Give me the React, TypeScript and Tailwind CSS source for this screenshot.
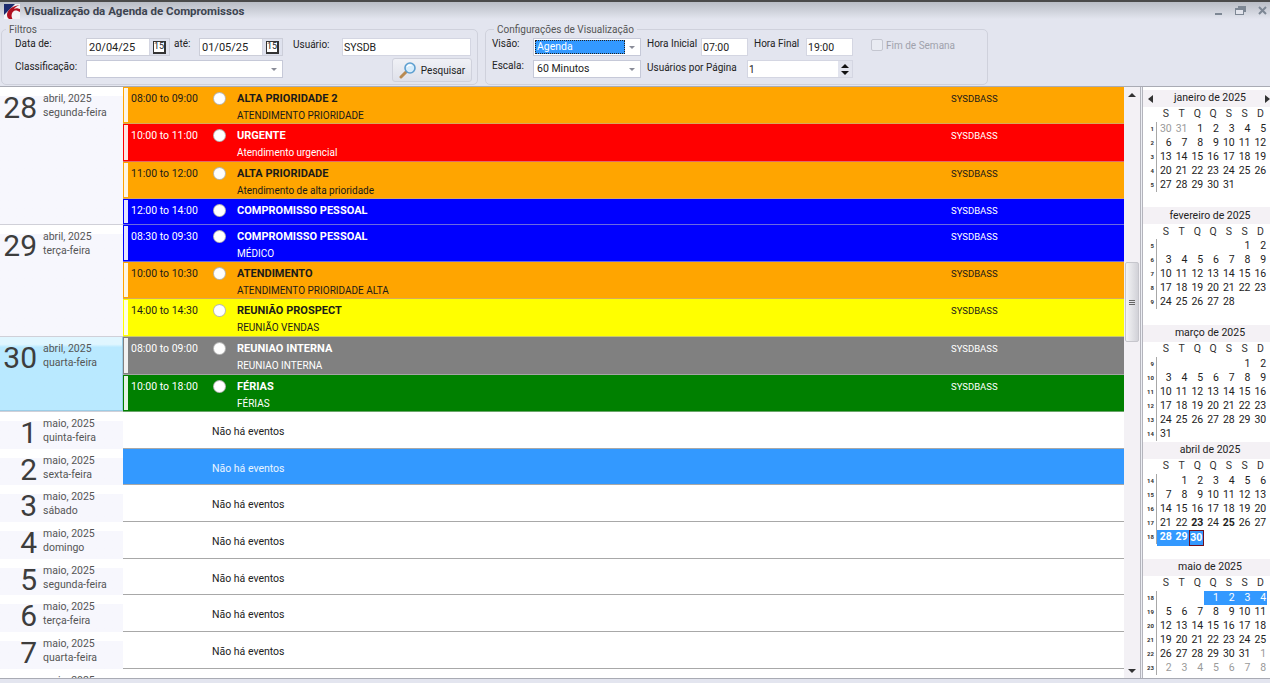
type Ev = { time: string; title: string; sub?: string; bg: string; edge: string; text: string; h: string };
type Day = { num: number; month: string; week: string; events?: Ev[]; selected?: boolean; active?: boolean };

const ORANGE = { bg: "bg-[#ffa500]", edge: "border-b-[#d9a95a]", text: "text-[#1a1a1a]" };
const RED = { bg: "bg-[#ff0000]", edge: "border-b-[#e06a6a]", text: "text-white" };
const BLUE = { bg: "bg-[#0000ff]", edge: "border-b-[#6a6ae0]", text: "text-white" };
const YELLOW = { bg: "bg-[#ffff00]", edge: "border-b-[#c9c96a]", text: "text-[#1a1a1a]" };
const GRAY = { bg: "bg-[#808080]", edge: "border-b-[#a5a5a5]", text: "text-white" };
const GREEN = { bg: "bg-[#008000]", edge: "border-b-[#6aa56a]", text: "text-white" };

const DAYS: Day[] = [
  {
    num: 28,
    month: "abril, 2025",
    week: "segunda-feira",
    events: [
      { time: "08:00 to 09:00", title: "ALTA PRIORIDADE 2", sub: "ATENDIMENTO PRIORIDADE", h: "h-[37px]", ...ORANGE },
      { time: "10:00 to 11:00", title: "URGENTE", sub: "Atendimento urgencial", h: "h-[38px]", ...RED },
      { time: "11:00 to 12:00", title: "ALTA PRIORIDADE", sub: "Atendimento de alta prioridade", h: "h-[37px]", ...ORANGE },
      { time: "12:00 to 14:00", title: "COMPROMISSO PESSOAL", h: "h-[26px]", ...BLUE },
    ],
  },
  {
    num: 29,
    month: "abril, 2025",
    week: "terça-feira",
    events: [
      { time: "08:30 to 09:30", title: "COMPROMISSO PESSOAL", sub: "MÉDICO", h: "h-[37px]", ...BLUE },
      { time: "10:00 to 10:30", title: "ATENDIMENTO", sub: "ATENDIMENTO PRIORIDADE ALTA", h: "h-[37px]", ...ORANGE },
      { time: "14:00 to 14:30", title: "REUNIÃO PROSPECT", sub: "REUNIÃO VENDAS", h: "h-[38px]", ...YELLOW },
    ],
  },
  {
    num: 30,
    month: "abril, 2025",
    week: "quarta-feira",
    active: true,
    events: [
      { time: "08:00 to 09:00", title: "REUNIAO INTERNA", sub: "REUNIAO INTERNA", h: "h-[38px]", ...GRAY },
      { time: "10:00 to 18:00", title: "FÉRIAS", sub: "FÉRIAS", h: "h-[37px]", ...GREEN },
    ],
  },
  { num: 1, month: "maio, 2025", week: "quinta-feira" },
  { num: 2, month: "maio, 2025", week: "sexta-feira", selected: true },
  { num: 3, month: "maio, 2025", week: "sábado" },
  { num: 4, month: "maio, 2025", week: "domingo" },
  { num: 5, month: "maio, 2025", week: "segunda-feira" },
  { num: 6, month: "maio, 2025", week: "terça-feira" },
  { num: 7, month: "maio, 2025", week: "quarta-feira" },
  { num: 8, month: "maio, 2025", week: "quinta-feira" },
];

type Cell = { d: number; muted?: boolean; blue?: boolean; bold?: boolean; box?: boolean; white?: boolean } | null;
type Month = { title: string; firstWeek: number; rows: Cell[][]; arrows?: boolean };

function weeks(offset: number, count: number, opts: { lead?: number[]; trail?: boolean; mark?: (d: number) => Partial<NonNullable<Cell>> } = {}): Cell[][] {
  const cells: Cell[] = [];
  for (let i = 0; i < offset; i++) cells.push(null);
  (opts.lead ?? []).forEach((d) => cells.push({ d, muted: true }));
  for (let d = 1; d <= count; d++) cells.push({ d, ...(opts.mark ? opts.mark(d) : {}) });
  let next = 1;
  while (opts.trail && cells.length < 42) cells.push({ d: next++, muted: true });
  const rows: Cell[][] = [];
  for (let i = 0; i < cells.length; i += 7) rows.push(cells.slice(i, i + 7));
  return rows;
}

const MONTHS: Month[] = [
  { title: "janeiro de 2025", firstWeek: 1, rows: weeks(0, 31, { lead: [30, 31] }), arrows: true },
  { title: "fevereiro de 2025", firstWeek: 5, rows: weeks(5, 28) },
  { title: "março de 2025", firstWeek: 9, rows: weeks(5, 31) },
  {
    title: "abril de 2025",
    firstWeek: 14,
    rows: weeks(1, 30, {
      mark: (d) => {
        if (d === 23 || d === 25) return { bold: true };
        if (d === 30) return { blue: true, bold: true, white: true, box: true };
        if (d >= 28) return { blue: true, bold: true, white: true };
        return {};
      },
    }),
  },
  {
    title: "maio de 2025",
    firstWeek: 18,
    rows: weeks(3, 31, { trail: true, mark: (d) => (d <= 4 ? { blue: true, white: true } : {}) }),
  },
];

function Logo() {
  return (
    <svg width="16" height="16" viewBox="0 0 16 16" className="mt-[2px] shrink-0">
      <rect width="16" height="16" fill="#f4f4f6" />
      <path d="M0 0 L11 0 L0 11 Z" fill="#1c2a6e" />
      <path d="M16 1 C8 2 3 6 3 11 C3 13 4 15 7 16 L9 16 C7 13 7 9 10 7 C12 6 14 7 16 8 L16 5 C13 4 12 4 10 5 C11 3 13 2 16 1 Z" fill="#b01020" />
    </svg>
  );
}

function WindowButtons() {
  return (
    <div className="flex items-center gap-[12px]">
      <svg width="8" height="8" viewBox="0 0 8 8">
        <rect x="0" y="6" width="7" height="2" fill="#7d8794" />
      </svg>
      <svg width="11" height="9" viewBox="0 0 11 9">
        <rect x="3" y="0" width="8" height="6" fill="#7d8794" />
        <rect x="0.5" y="2.5" width="8" height="6" fill="#e2e4ec" stroke="#7d8794" />
        <rect x="0" y="2" width="9" height="2" fill="#7d8794" />
      </svg>
      <svg width="9" height="9" viewBox="0 0 9 9">
        <path d="M1 1 L8 8 M8 1 L1 8" stroke="#7d8794" strokeWidth="2" />
      </svg>
    </div>
  );
}

function CalendarButton() {
  return (
    <div className="flex h-full w-[20px] items-center justify-center border-l border-[#d4d6e2] bg-[#dfe2ee]">
      <span className="flex h-[13px] w-[13px] items-center justify-center border border-b-2 border-r-2 border-[#333] bg-white text-[9px] leading-none text-[#222]">
        15
      </span>
    </div>
  );
}

function DateField({ value }: { value: string }) {
  return (
    <div className="flex h-[18px] w-[84px] items-center border border-[#ccced9] bg-white">
      <span className="flex-1 pl-[2px] pt-[2px] text-[11px]">{value}</span>
      <CalendarButton />
    </div>
  );
}

function TextBox({ value, className }: { value: string; className: string }) {
  return (
    <div className={"flex h-[18px] items-center border border-[#d4d6e2] bg-white pl-[1px] pt-[1px] text-[10.5px] " + className}>{value}</div>
  );
}

function Select({ value, focused, className }: { value: string; focused?: boolean; className: string }) {
  return (
    <div className={"flex h-[18px] items-center border border-[#c6c9d8] bg-white " + className}>
      <div className="min-w-0 flex-1 p-[1px]">
        {focused ? (
          <div className="flex h-[14px] w-[90px] items-center border border-dotted border-[#222] bg-[#3399ff] pl-[1px] text-white">{value}</div>
        ) : (
          <span className="pl-[2px]">{value}</span>
        )}
      </div>
      <span className="mr-[5px] mt-[1px] h-0 w-0 border-x-[3px] border-t-[3px] border-x-transparent border-t-[#8a8c98]" />
    </div>
  );
}

function SearchIcon() {
  return (
    <svg width="18" height="17" viewBox="0 0 18 17">
      <path d="M8 9 L2 15" stroke="#b88a52" strokeWidth="3" strokeLinecap="round" />
      <circle cx="11" cy="6" r="5" fill="#d7ecfb" stroke="#5d9fd0" strokeWidth="1.6" />
      <path d="M8 5 C9 3.5 11 3 12.5 3.5" stroke="#fff" strokeWidth="1.2" fill="none" />
    </svg>
  );
}

function Toolbar() {
  return (
    <div className="flex h-[68px] gap-[7px] border-b border-[#a9abb4] bg-[#e3e5ef] pl-[1px] text-[10px] text-[#222]">
      <fieldset className="mt-[4px] h-[62px] w-[477px] shrink-0 rounded-[5px] border border-[#cfd1dc] pl-[13px]">
        <legend className="-ml-[9px] px-[3px] leading-[13px] text-[#555]">Filtros</legend>
        <div className="mt-[2px] flex items-start">
          <span className="-mt-[2px] w-[71px]">Data de:</span>
          <DateField value="20/04/25" />
          <span className="-mt-[2px] ml-[4px] w-[25px]">até:</span>
          <DateField value="01/05/25" />
          <span className="-mt-[1px] ml-[10px] w-[49px]">Usuário:</span>
          <TextBox value="SYSDB" className="w-[129px]" />
        </div>
        <div className="mt-[4px] flex items-start">
          <span className="-mt-[1px] w-[71px]">Classificação:</span>
          <Select value="" className="w-[197px]" />
          <button className="-mt-[2px] ml-[109px] flex h-[24px] w-[80px] items-center justify-center gap-[4px] rounded-[3px] border border-[#cfd1dc] bg-gradient-to-b from-[#f0f1f6] to-[#dfe1ea] text-[#222]">
            <SearchIcon />
            Pesquisar
          </button>
        </div>
      </fieldset>

      <fieldset className="mt-[4px] h-[62px] w-[503px] shrink-0 rounded-[5px] border border-[#cfd1dc] pl-[6px]">
        <legend className="ml-[2px] px-[3px] leading-[13px] text-[#555]">Configurações de Visualização</legend>
        <div className="mt-[2px] flex items-start">
          <span className="-mt-[2px] w-[41px]">Visão:</span>
          <Select value="Agenda" focused className="w-[108px] text-[10.5px]" />
          <span className="-mt-[2px] ml-[6px] w-[54px]">Hora Inicial</span>
          <TextBox value="07:00" className="w-[47px]" />
          <span className="-mt-[2px] ml-[6px] w-[52px]">Hora Final</span>
          <TextBox value="19:00" className="w-[47px]" />
          <span className="ml-[18px] mt-[1px] h-[12px] w-[12px] rounded-[2px] border border-[#c4c6d0] bg-[#e9ebf2]" />
          <span className="ml-[3px] text-[#a0a2ac]">Fim de Semana</span>
        </div>
        <div className="mt-[4px] flex items-start">
          <span className="-mt-[2px] w-[41px]">Escala:</span>
          <Select value="60 Minutos" className="w-[108px] text-[10.5px]" />
          <span className="ml-[6px] w-[100px]">Usuários por Página</span>
          <div className="flex h-[18px] w-[106px] items-center justify-between border border-[#d4d6e2] bg-white pl-[1px]">
            <span>1</span>
            <div className="flex h-full w-[14px] flex-col items-center justify-center gap-[3px] bg-[#e2e4ee]">
              <span className="h-0 w-0 border-x-[4px] border-b-[4px] border-x-transparent border-b-[#111]" />
              <span className="h-0 w-0 border-x-[4px] border-t-[4px] border-x-transparent border-t-[#111]" />
            </div>
          </div>
        </div>
      </fieldset>
    </div>
  );
}

function DateCell({ day }: { day: Day }) {
  const fill = day.active
    ? "bg-gradient-to-b from-[#e0f6ff] from-[10%] to-[#b9e9ff] to-[14%] border-r border-b border-[#9ccde6]"
    : "bg-gradient-to-b from-white from-[9px] to-[#f7f7fd] to-[9px]";
  return (
    <div className={"flex h-full w-[123px] shrink-0 items-start " + fill}>
      <span className="mt-[3px] w-[37px] text-right text-[30px] leading-[36px] text-[#3d3d3d]">{day.num}</span>
      <div className="ml-[6px] mt-[5px] text-[#555]">
        <div className="leading-[14px]">{day.month}</div>
        <div className="leading-[14px]">{day.week}</div>
      </div>
    </div>
  );
}

function EventRow({ ev }: { ev: Ev }) {
  return (
    <div className={"flex items-start border-b " + ev.h + " " + ev.bg + " " + ev.edge + " " + ev.text}>
      <span className="mx-[1px] mt-[1px] h-[calc(100%-2px)] w-[4px] shrink-0 bg-white/90" />
      <span className="ml-[2px] mt-[5px] w-[81px] shrink-0 leading-[14px]">{ev.time}</span>
      <span className="ml-[1px] mt-[5px] h-[13px] w-[13px] shrink-0 rounded-full border border-[#888]/60 bg-white" />
      <div className="ml-[11px] mt-[5px] w-[714px] shrink-0">
        <div className="text-[11px] font-bold leading-[14px]">{ev.title}</div>
        {ev.sub && <div className="mt-[3px] text-[10px] leading-[14px]">{ev.sub}</div>}
      </div>
      <span className="mt-[5px] text-[9.5px] leading-[14px]">SYSDBASS</span>
    </div>
  );
}

function DayRow({ day }: { day: Day }) {
  if (day.events) {
    return (
      <div className="flex">
        <div className="border-b border-[#d0d0d8]">
          <DateCell day={day} />
        </div>
        <div className="flex-1">
          {day.events.map((ev) => (
            <EventRow key={ev.time} ev={ev} />
          ))}
        </div>
      </div>
    );
  }
  return (
    <div className="flex h-[36.7px] shrink-0">
      <DateCell day={day} />
      <div
        className={
          "flex flex-1 items-start border-b border-[#a8a8a8] pl-[89px] pt-[13px] leading-[14px] " +
          (day.selected ? "bg-[#3399ff] text-white/90" : "text-[#222]")
        }
      >
        Não há eventos
      </div>
    </div>
  );
}

function Scrollbar() {
  return (
    <div className="flex w-[16px] shrink-0 flex-col items-center bg-[#f3f1f5]">
      <span className="mt-[6px] h-0 w-0 border-x-[4px] border-b-[4px] border-x-transparent border-b-[#333]" />
      <div className="mt-[165px] flex h-[80px] w-[14px] flex-col items-center justify-center gap-[1px] rounded-[2px] border border-[#c6c6cc] bg-gradient-to-r from-[#f4f4f6] to-[#d2d2d8]">
        <span className="h-px w-[6px] bg-[#666]" />
        <span className="h-px w-[6px] bg-[#666]" />
        <span className="h-px w-[6px] bg-[#666]" />
      </div>
      <span className="mt-auto mb-[5px] h-0 w-0 border-x-[4px] border-t-[4px] border-x-transparent border-t-[#333]" />
    </div>
  );
}

const DOW = ["S", "T", "Q", "Q", "S", "S", "D"];

function MonthView({ month }: { month: Month }) {
  return (
    <div className="h-[117.25px] shrink-0">
      <div className="flex h-[17px] items-center justify-between bg-[#f4f1f5] pl-[5px] pr-0">
        <span className={"h-0 w-0 border-y-[4px] border-r-[5px] border-y-transparent border-r-[#333] " + (month.arrows ? "" : "invisible")} />
        <span className="pl-[2px] text-[10.5px] leading-none text-[#222]">{month.title}</span>
        <span className={"h-0 w-0 border-y-[4px] border-l-[5px] border-y-transparent border-l-[#333] " + (month.arrows ? "" : "invisible")} />
      </div>
      <div className="grid h-[15px] grid-cols-[14px_repeat(7,15.75px)] items-center text-[#333]">
        <span />
        {DOW.map((d, i) => (
          <span key={i} className="pl-[2px] text-center leading-none">
            {d}
          </span>
        ))}
      </div>
      <div className="flex">
        <div className="w-[14px] border-r border-[#a8a8a8]">
          {month.rows.map((_, i) => (
            <div key={i} className="h-[14px] pr-[2px] text-right text-[6px] font-bold leading-[14px] text-[#333]">
              {month.firstWeek + i}
            </div>
          ))}
        </div>
        <div>
          {month.rows.map((row, i) => (
            <div key={i} className="grid h-[14px] grid-cols-[repeat(7,15.75px)]">
              {row.map((c, j) =>
                c ? (
                  <span
                    key={j}
                    className={
                      "pr-[1px] text-right leading-[14px] " +
                      (c.blue ? "bg-[#3399ff] " : "") +
                      (c.white ? "text-white " : c.muted ? "text-[#9a9a9a] " : "text-[#222] ") +
                      (c.bold ? "font-bold " : "") +
                      (c.box ? "border border-[#6e1020] leading-[12px]" : "")
                    }
                  >
                    {c.d}
                  </span>
                ) : (
                  <span key={j} />
                ),
              )}
            </div>
          ))}
        </div>
      </div>
    </div>
  );
}

export default function App() {
  return (
    <div className="flex h-[683px] w-[1270px] flex-col overflow-hidden bg-white font-['Roboto',sans-serif] text-[10.5px] text-[#222]">
      {/* Title bar */}
      <div className="flex h-[19px] shrink-0 items-center justify-between border-t-2 border-[#4a4a4a] bg-gradient-to-b from-[#b9bdc5] to-[#e3e5ef] pl-[4px] pr-[3px]">
        <div className="flex items-center gap-[4px]">
          <Logo />
          <span className="pt-[2px] text-[11.5px] font-bold text-[#3d4450]">Visualização da Agenda de Compromissos</span>
        </div>
        <WindowButtons />
      </div>

      <Toolbar />

      {/* Agenda + mini calendars */}
      <div className="flex min-h-0 flex-1">
        <div className="flex min-w-0 flex-1 flex-col overflow-hidden">
          {DAYS.map((day) => (
            <DayRow key={day.num} day={day} />
          ))}
        </div>
        <Scrollbar />
        <div className="w-[3px] shrink-0 border-x border-[#b4b4bc] bg-[#eceef4]" />
        <div className="w-[127px] shrink-0 overflow-hidden pt-[3px]">
          {MONTHS.map((m) => (
            <MonthView key={m.title} month={m} />
          ))}
        </div>
      </div>

      <div className="h-[5px] shrink-0 border-t border-[#a9abb4] bg-[#e3e5ef]" />
    </div>
  );
}
